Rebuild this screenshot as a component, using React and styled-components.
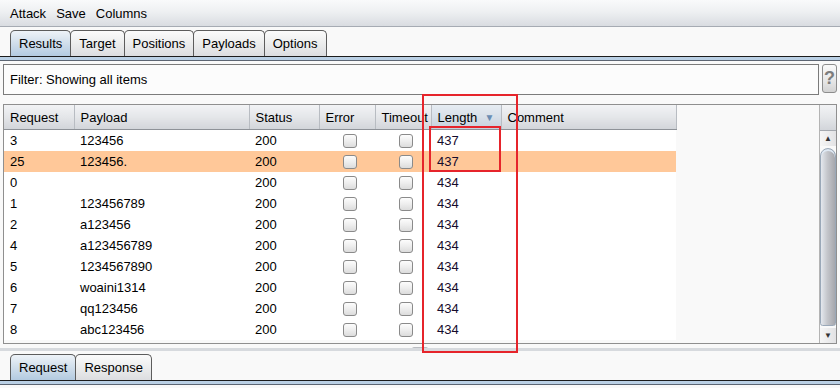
import styled, { createGlobalStyle } from "styled-components"

const GlobalStyle = createGlobalStyle`
    html, body {
        margin: 0;
        padding: 0;
        background: #f9f9f9;
    }
    body {
        font-family: "Liberation Sans", Arial, sans-serif;
        font-size: 13px;
        color: #000;
    }
`;

const Window = styled.div`
    position: relative;
    width: 840px;
    height: 388px;
    overflow: hidden;
    background: #f9f9f9;
`;

const MenuBar = styled.div`
    height: 26px;
    display: flex;
    align-items: center;
    padding-left: 10px;
    background: linear-gradient(#f9fafb, #eef0f2 45%, #d9dce1);
    border-bottom: 1px solid #a6abb3;
`;

const MenuItem = styled.span`
    margin-right: 10px;
    padding-top: 1px;
`;

const TabStrip = styled.div`
    height: ${p => p.$height}px;
    display: flex;
    align-items: flex-end;
    padding-left: 10px;
`;

const Tab = styled.div`
    height: 25px;
    display: flex;
    align-items: center;
    padding: 0 8px;
    margin-left: -1px;
    border: 1px solid #5c5c5c;
    border-bottom: none;
    border-radius: 5px 5px 0 0;
    background: ${p => p.$active
        ? "linear-gradient(#eef3f8, #d3e0ec 45%, #b3cae0)"
        : "linear-gradient(#fbfbfb, #eceded 50%, #dcdde0)"};
    &:first-child {
        margin-left: 0;
    }
`;

const TabRule = styled.div`
    height: 3px;
    border-top: 1px solid #1c1c1c;
    border-bottom: 1px solid #5d6673;
    background: #bad0e5;
`;

const FilterRow = styled.div`
    display: flex;
    align-items: flex-start;
    padding: 3px 3px 0 3px;
    margin-bottom: 9px;
`;

const FilterBox = styled.div`
    flex: 1;
    height: 29px;
    display: flex;
    align-items: center;
    padding-left: 6px;
    border: 1px solid #7b7b7b;
    background: #fcfcfc;
`;

const HelpButton = styled.div`
    width: 13px;
    height: 27px;
    margin-left: 3px;
    display: flex;
    align-items: center;
    justify-content: center;
    border: 1px solid #8d8d8d;
    border-radius: 3px;
    background: linear-gradient(#fafafa, #e6e6e6 60%, #d2d2d2);
    color: #7d7d7d;
    font-weight: bold;
    font-size: 18px;
`;

const ScrollPane = styled.div`
    margin: 0 3px;
    height: 238px;
    display: flex;
    border: 1px solid #8f8f8f;
    background: #f9f9f9;
`;

const Viewport = styled.div`
    flex: 1;
    overflow: hidden;
`;

const Table = styled.table`
    border-collapse: collapse;
    table-layout: fixed;
    width: 672px;
`;

const HeadCell = styled.th`
    height: 24px;
    padding: 0 0 0 6px;
    text-align: left;
    font-weight: normal;
    white-space: nowrap;
    overflow: hidden;
    border-right: 1px solid #b8bcc2;
    border-bottom: 1px solid #8e9298;
    background: ${p => p.$sorted
        ? "linear-gradient(#e6ecf2, #d7dfe8 50%, #c6d0db)"
        : "linear-gradient(#f2f3f5, #e4e6e9 50%, #d2d5da)"};
`;

const HeadInner = styled.div`
    display: flex;
    align-items: center;
    justify-content: space-between;
    padding-right: 6px;
`;

const SortArrow = styled.span`
    color: #6b8db3;
    font-size: 10px;
`;

const Row = styled.tr`
    height: 21px;
    background: ${p => (p.$highlight ? "#ffc899" : "#ffffff")};
`;

const Cell = styled.td`
    padding: 0 0 0 ${p => (p.$pad ? p.$pad : 6)}px;
    text-align: ${p => (p.$center ? "center" : "left")};
    white-space: nowrap;
    overflow: hidden;
`;

const LengthText = styled.span`
    color: #150b2c;
`;

const Checkbox = styled.span`
    display: inline-block;
    width: 12px;
    height: 12px;
    vertical-align: middle;
    border: 1px solid #8a8a8a;
    border-radius: 3px;
    background: linear-gradient(#fdfdfd, #ececec 55%, #dcdcdc);
`;

const ScrollBar = styled.div`
    width: 16px;
    display: flex;
    flex-direction: column;
    border-left: 1px solid #b4b4b4;
`;

const Corner = styled.div`
    height: 25px;
    border-bottom: 1px solid #a4a8ae;
    background: linear-gradient(#f2f3f5, #e4e6e9 50%, #d2d5da);
`;

const ArrowButton = styled.div`
    height: 15px;
    display: flex;
    align-items: center;
    justify-content: center;
    background: linear-gradient(90deg, #f6f6f6, #e2e2e4);
    color: #333;
    font-size: 8px;
`;

const Thumb = styled.div`
    flex: 1;
    margin: 2px 0 2px 0;
    border: 1px solid #9aa8b8;
    border-radius: 9px 9px 3px 3px;
    background: linear-gradient(90deg, #e4e8ee, #c4c6cb 45%, #a6a7ad);
    box-shadow: inset 0 2px 0 #dfe9f4;
`;

const Splitter = styled.div`
    height: 9px;
    display: flex;
    flex-direction: column;
    justify-content: center;
    align-items: center;
`;

const SplitLine = styled.div`
    width: 100%;
    height: 3px;
    background: #d7dade;
`;

const SplitHandle = styled.div`
    width: 16px;
    height: 2px;
    margin-bottom: -1px;
    border-radius: 2px 2px 0 0;
    background: #b9bcc1;
`;

const Mark = styled.div`
    position: absolute;
    left: ${p => p.$x}px;
    top: ${p => p.$y}px;
    width: ${p => p.$w}px;
    height: ${p => p.$h}px;
    box-sizing: border-box;
    border: 2px solid #e6242b;
    pointer-events: none;
`;

const columns = [
    { name: "Request", width: 70 },
    { name: "Payload", width: 175 },
    { name: "Status", width: 70 },
    { name: "Error", width: 56 },
    { name: "Timeout", width: 56 },
    { name: "Length", width: 70, sorted: true },
    { name: "Comment", width: 175 },
];

const rows = [
    ["3", "123456", "437"],
    ["25", "123456.", "437", true],
    ["0", "", "434"],
    ["1", "123456789", "434"],
    ["2", "a123456", "434"],
    ["4", "a123456789", "434"],
    ["5", "1234567890", "434"],
    ["6", "woaini1314", "434"],
    ["7", "qq123456", "434"],
    ["8", "abc123456", "434"],
];

const App = () => {
    return (
        <Window>
            <GlobalStyle />
            <MenuBar>
                <MenuItem>Attack</MenuItem>
                <MenuItem>Save</MenuItem>
                <MenuItem>Columns</MenuItem>
            </MenuBar>
            <TabStrip $height={29}>
                <Tab $active>Results</Tab>
                <Tab>Target</Tab>
                <Tab>Positions</Tab>
                <Tab>Payloads</Tab>
                <Tab>Options</Tab>
            </TabStrip>
            <TabRule />
            <FilterRow>
                <FilterBox>Filter: Showing all items</FilterBox>
                <HelpButton>?</HelpButton>
            </FilterRow>
            <ScrollPane>
                <Viewport>
                    <Table>
                        <colgroup>
                            {columns.map(c => <col key={c.name} style={{ width: c.width }} />)}
                        </colgroup>
                        <thead>
                            <tr>
                                {columns.map(c => (
                                    <HeadCell key={c.name} $sorted={c.sorted}>
                                        <HeadInner>
                                            <span>{c.name}</span>
                                            {c.sorted && <SortArrow>▼</SortArrow>}
                                        </HeadInner>
                                    </HeadCell>
                                ))}
                            </tr>
                        </thead>
                        <tbody>
                            {rows.map(([req, payload, len, hi]) => (
                                <Row key={req} $highlight={hi}>
                                    <Cell>{req}</Cell>
                                    <Cell>{payload}</Cell>
                                    <Cell>200</Cell>
                                    <Cell $center $pad={0}><Checkbox /></Cell>
                                    <Cell $center $pad={0}><Checkbox /></Cell>
                                    <Cell><LengthText>{len}</LengthText></Cell>
                                    <Cell />
                                </Row>
                            ))}
                        </tbody>
                    </Table>
                </Viewport>
                <ScrollBar>
                    <Corner />
                    <ArrowButton>▲</ArrowButton>
                    <Thumb />
                    <ArrowButton>▼</ArrowButton>
                </ScrollBar>
            </ScrollPane>
            <Splitter>
                <SplitHandle />
                <SplitLine />
            </Splitter>
            <TabStrip $height={27}>
                <Tab $active>Request</Tab>
                <Tab>Response</Tab>
            </TabStrip>
            <TabRule />
            <Mark $x={422} $y={94} $w={96} $h={259} />
            <Mark $x={429} $y={126} $w={72} $h={46} />
        </Window>
    )
}

export default App
